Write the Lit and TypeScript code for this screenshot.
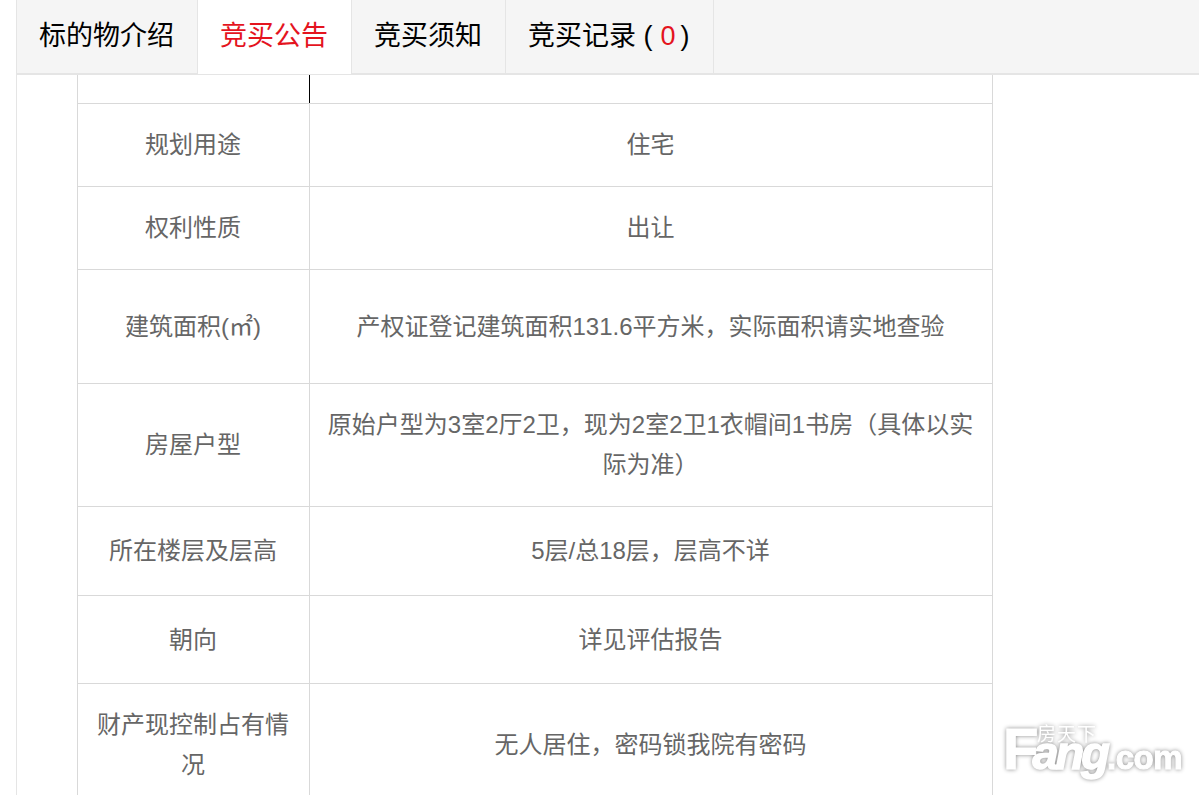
import { LitElement, html, css } from "lit";
import { customElement } from "lit/decorators.js";

interface Row { label: string; value: string; h: number; }

const ROWS: Row[] = [
  { label: "规划用途", value: "住宅", h: 83 },
  { label: "权利性质", value: "出让", h: 83 },
  { label: "建筑面积(㎡)", value: "产权证登记建筑面积131.6平方米，实际面积请实地查验", h: 114 },
  { label: "房屋户型", value: "原始户型为3室2厅2卫，现为2室2卫1衣帽间1书房（具体以实际为准）", h: 123 },
  { label: "所在楼层及层高", value: "5层/总18层，层高不详", h: 89 },
  { label: "朝向", value: "详见评估报告", h: 88 },
  { label: "财产现控制占有情况", value: "无人居住，密码锁我院有密码", h: 123 },
];

@customElement("app-root")
export class AppRoot extends LitElement {
  static styles = css`
    :host {
      display: block;
      position: relative;
      width: 1199px;
      height: 795px;
      overflow: hidden;
      background: #fff;
      font-family: "Liberation Sans", "Noto Sans CJK SC", sans-serif;
    }
    .wrap {
      margin-left: 16px;
      border-left: 1px solid #e5e5e5;
      height: 795px;
      box-sizing: border-box;
    }
    .tabs {
      display: flex;
      height: 75px;
      box-sizing: border-box;
      background: #f5f5f5;
      border-bottom: 2px solid #e5e5e5;
    }
    .tab {
      padding: 0 23px 0 22px;
      height: 73px;
      line-height: 72px;
      font-size: 27px;
      color: #000;
      border-right: 1px solid #e5e5e5;
      white-space: nowrap;
    }
    .tab.on {
      height: 74px;
      background: #fff;
      color: #e4141e;
    }
    .count { color: #e4141e; padding: 0 5px 0 8px; }
    .body { padding-left: 60px; }
    table {
      border-collapse: collapse;
      table-layout: fixed;
      width: 916px;
      font-size: 24px;
      line-height: 40px;
      color: #666;
    }
    td {
      border: 1px solid #d9d9d9;
      text-align: center;
      vertical-align: middle;
      padding: 0 17px 0 16px;
    }
    .c1 { width: 232px; }
    .top td { border-top: 0; height: 28px; padding: 0; }
    .top td.k { border-right: 1px solid #000; }
    .logo {
      position: absolute;
      left: 1003px;
      top: 727px;
      width: 190px;
      height: 54px;
      color: #fff;
      font-weight: 700;
      white-space: nowrap;
      line-height: 44px;
      filter: drop-shadow(0 0 2px rgba(0, 0, 0, 0.45));
    }
    .word { display: block; font-size: 58px; -webkit-text-stroke: 1px #fff; }
    .f { letter-spacing: -6px; }
    .ang { font-size: 47px; letter-spacing: -3px; font-style: italic; -webkit-text-stroke: 1.5px #fff; }
    .com { font-size: 33px; letter-spacing: -0.5px; -webkit-text-stroke: 1px #fff; }
    .cn {
      position: absolute;
      left: 34px;
      top: 0;
      font-size: 19px;
      line-height: 15px;
      letter-spacing: 1px;
      font-weight: 400;
    }
  `;

  render() {
    return html`
      <div class="wrap">
        <div class="tabs">
          <div class="tab">标的物介绍</div>
          <div class="tab on">竞买公告</div>
          <div class="tab">竞买须知</div>
          <div class="tab">竞买记录 (<span class="count">0</span>)</div>
        </div>
        <div class="body">
          <table>
            <colgroup><col class="c1" /><col /></colgroup>
            <tr class="top"><td class="k"></td><td></td></tr>
            ${ROWS.map(
              (r) => html`<tr style="height:${r.h}px"><td>${r.label}</td><td>${r.value}</td></tr>`
            )}
          </table>
        </div>
      </div>
      <div class="logo">
        <span class="word"><span class="f">F</span><span class="ang">ang</span><span class="com">.com</span></span>
        <span class="cn">房天下</span>
      </div>
    `;
  }
}
